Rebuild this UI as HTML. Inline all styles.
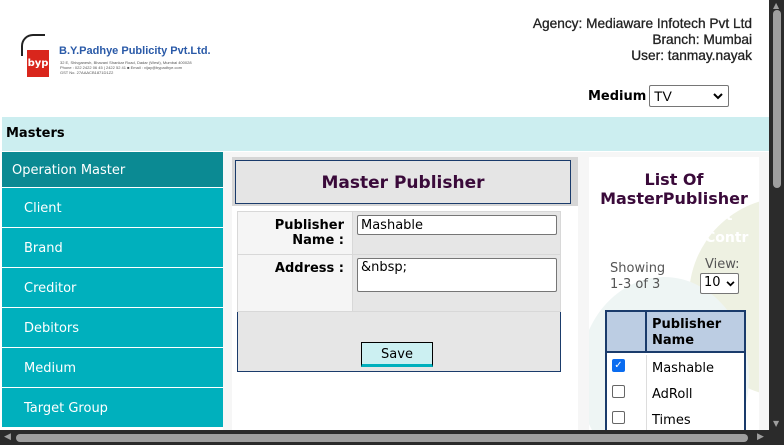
<!DOCTYPE html>
<html><head><style>
*{margin:0;padding:0;box-sizing:border-box}
html,body{width:784px;height:445px;overflow:hidden}
body{background:#fff;font-family:"DejaVu Sans",Verdana,sans-serif;position:relative}
#w{position:absolute;left:0;top:0;width:784px;height:445px;overflow:hidden}
.a{position:absolute}
.side div{position:absolute;left:2px;width:221px;height:39px;background:#00b0bd;color:#fff;font-size:13px;padding-left:22px;line-height:41px}
.hdr{font-family:"Liberation Sans",Arial,sans-serif;font-size:13.7px;color:#222;text-align:right;line-height:16px;-webkit-text-stroke:0.3px #222}
.lbl{font-weight:bold;font-size:13px;text-align:right}
</style></head><body><div id="w">
<div class="a" style="left:27px;top:50px;width:22px;height:27px;background:#d9261c;color:#fff;font-size:10px;font-weight:bold;line-height:27px;text-align:center">byp</div>
<div class="a" style="left:21px;top:34px;width:24px;height:22px;border:2px solid #222;border-right:none;border-bottom:none;border-radius:12px 0 0 0"></div>
<div class="a" style="left:59px;top:45px;font-family:'Liberation Sans',Arial;font-weight:bold;font-size:11px;color:#2a5aa8">B.Y.Padhye Publicity Pvt.Ltd.</div>
<div class="a" style="left:60px;top:60px;font-size:4px;color:#555;line-height:5px;font-family:'Liberation Sans'">32 E, Shivganesh, Bhavani Shankar Road, Dadar (West), Mumbai 400028<br>Phone : 022 2422 06 45 | 2422 52 41 &#9632; Email : vijay@bypadhye.com<br>GST No. 27AAACB1871D1Z2</div>
<div class="a hdr" style="right:32px;top:16px;width:300px">Agency: Mediaware Infotech Pvt Ltd<br>Branch: Mumbai<br>User: tanmay.nayak</div>
<div class="a" style="left:588px;top:89px;font-weight:bold;font-size:13px">Medium</div>
<div class="a" style="left:649px;top:85px;width:80px;height:22px;border:1px solid #767676;border-radius:2px;font-family:'Liberation Sans';font-size:14px;padding:2px 4px">TV<svg style="position:absolute;right:5px;top:7px" width="10" height="7" viewBox="0 0 10 7"><path d="M1 1l4 4 4-4" fill="none" stroke="#000" stroke-width="2"/></svg></div>
<div class="a" style="left:2px;top:117px;width:767px;height:34px;background:#cceef0;font-weight:bold;font-size:13px;padding:9px 4px">Masters</div>
<div class="side">
<div style="top:152px;background:#0b8a93;height:35px;line-height:37px;padding-left:10px">Operation Master</div>
<div style="top:188px">Client</div>
<div style="top:228px">Brand</div>
<div style="top:268px">Creditor</div>
<div style="top:308px">Debitors</div>
<div style="top:348px">Medium</div>
<div style="top:388px">Target Group</div>
</div>
<div class="a" style="left:223px;top:152px;width:546px;height:278px;background:#f6f6f6"></div>
<div class="a" style="left:232px;top:157px;width:346px;height:273px;background:#fff"></div>
<div class="a" style="left:232px;top:157px;width:346px;height:49px;background:#d6d6d6"></div>
<div class="a" style="left:235px;top:160px;width:336px;height:44px;background:#e5e5e5;border:1px solid #1a3b6b;text-align:center;font-weight:bold;font-size:17px;color:#3a0a3a;line-height:45px">Master Publisher</div>
<div class="a" style="left:237px;top:211px;width:324px;height:161px;background:#e6e6e6;border:1px solid #1a3b6b;border-top:none"></div>
<div class="a" style="left:237px;top:211px;width:324px;height:101px;background:#e6e6e6;border:1px solid #d8d8d8"></div>
<div class="a" style="left:238px;top:212px;width:115px;height:99px;background:#f5f5f5;border-right:1px solid #d8d8d8"></div>
<div class="a" style="left:238px;top:254px;width:322px;height:1px;background:#d8d8d8"></div>
<div class="a lbl" style="left:240px;top:218px;width:104px;line-height:15px">Publisher<br>Name :</div>
<div class="a lbl" style="left:240px;top:261px;width:104px">Address :</div>
<div class="a" style="left:357px;top:215px;width:200px;height:20px;background:#fff;border:1px solid #767676;border-radius:2px;font-size:13px;padding:2px 3px">Mashable</div>
<div class="a" style="left:357px;top:258px;width:200px;height:34px;background:#fff;border:1px solid #767676;border-radius:2px;font-size:13px;padding:1px 3px">&amp;nbsp;</div>
<div class="a" style="left:361px;top:342px;width:72px;height:25px;background:#ccf0f2;border:1px solid #000;border-bottom:3px solid #00b0bd;text-align:center;font-size:13px;line-height:23px">Save</div>
<div class="a" style="left:589px;top:157px;width:170px;height:273px;background:#fff;overflow:hidden">
<div class="a" style="left:100px;top:40px;width:200px;height:200px;border-radius:50%;background:#eef1e2"></div>
<div class="a" style="left:-10px;top:120px;width:170px;height:200px;border-radius:50%;background:#eef5f4"></div>
<div class="a" style="left:116px;top:48px;color:#fff;font-weight:bold;font-size:14px;line-height:22px">Aut<br>Contr</div>
</div>
<div class="a" style="left:589px;top:170px;width:170px;text-align:center;font-weight:bold;font-size:16px;color:#3a0a3a;line-height:19px">List Of<br>MasterPublisher</div>
<div class="a" style="left:610px;top:261px;font-size:13px;color:#555;line-height:16px">Showing<br>1-3 of 3</div>
<div class="a" style="left:705px;top:257px;font-size:13px;color:#555">View:</div>
<div class="a" style="left:700px;top:273px;width:39px;height:21px;border:1px solid #767676;border-radius:2px;font-size:13px;padding:1px 3px;background:#fff">10<svg style="position:absolute;right:3px;top:7px" width="9" height="6" viewBox="0 0 10 7"><path d="M1 1l4 4 4-4" fill="none" stroke="#000" stroke-width="2"/></svg></div>
<div class="a" style="left:605px;top:310px;width:141px;height:120px;border:2px solid #1a3b6b;border-bottom:none;background:#fff"></div>
<div class="a" style="left:607px;top:312px;width:137px;height:41px;background:#bccde3;border-bottom:2px solid #1a3b6b"></div>
<div class="a" style="left:645px;top:312px;width:2px;height:41px;background:#1a3b6b"></div>
<div class="a" style="left:646px;top:355px;width:1px;height:75px;background:#ddd"></div>
<div class="a" style="left:652px;top:317px;font-weight:bold;font-size:13px;line-height:16px">Publisher<br>Name</div>
<div class="a" style="left:612px;top:359px;width:13px;height:13px;border-radius:2px;background:#0a6cf0;color:#fff;font-size:10px;line-height:13px;text-align:center">&#10003;</div>
<div class="a" style="left:612px;top:385px;width:13px;height:13px;border-radius:2px;border:1px solid #666"></div>
<div class="a" style="left:612px;top:411px;width:13px;height:13px;border-radius:2px;border:1px solid #666"></div>
<div class="a" style="left:652px;top:361px;font-size:13px">Mashable</div>
<div class="a" style="left:652px;top:387px;font-size:13px">AdRoll</div>
<div class="a" style="left:652px;top:413px;font-size:13px;line-height:15px">Times</div>
<div class="a" style="left:769px;top:0;width:15px;height:445px;background:#2b2b2b"></div>
<div class="a" style="left:773px;top:10px;width:8px;height:178px;background:#9f9f9f;border-radius:4px"></div>
<div class="a" style="left:0;top:430px;width:784px;height:15px;background:#2b2b2b"></div>
<div class="a" style="left:16px;top:434px;width:732px;height:8px;background:#9f9f9f;border-radius:4px"></div>
<div class="a" style="left:4px;top:432px;color:#9f9f9f;font-size:9px;line-height:10px">&#9664;</div>
<div class="a" style="left:757px;top:432px;color:#9f9f9f;font-size:9px;line-height:10px">&#9654;</div>
<div class="a" style="left:773px;top:1px;color:#9f9f9f;font-size:8px;line-height:9px">&#9650;</div>
<div class="a" style="left:773px;top:419px;color:#9f9f9f;font-size:8px;line-height:9px">&#9660;</div>
</div></body></html>
